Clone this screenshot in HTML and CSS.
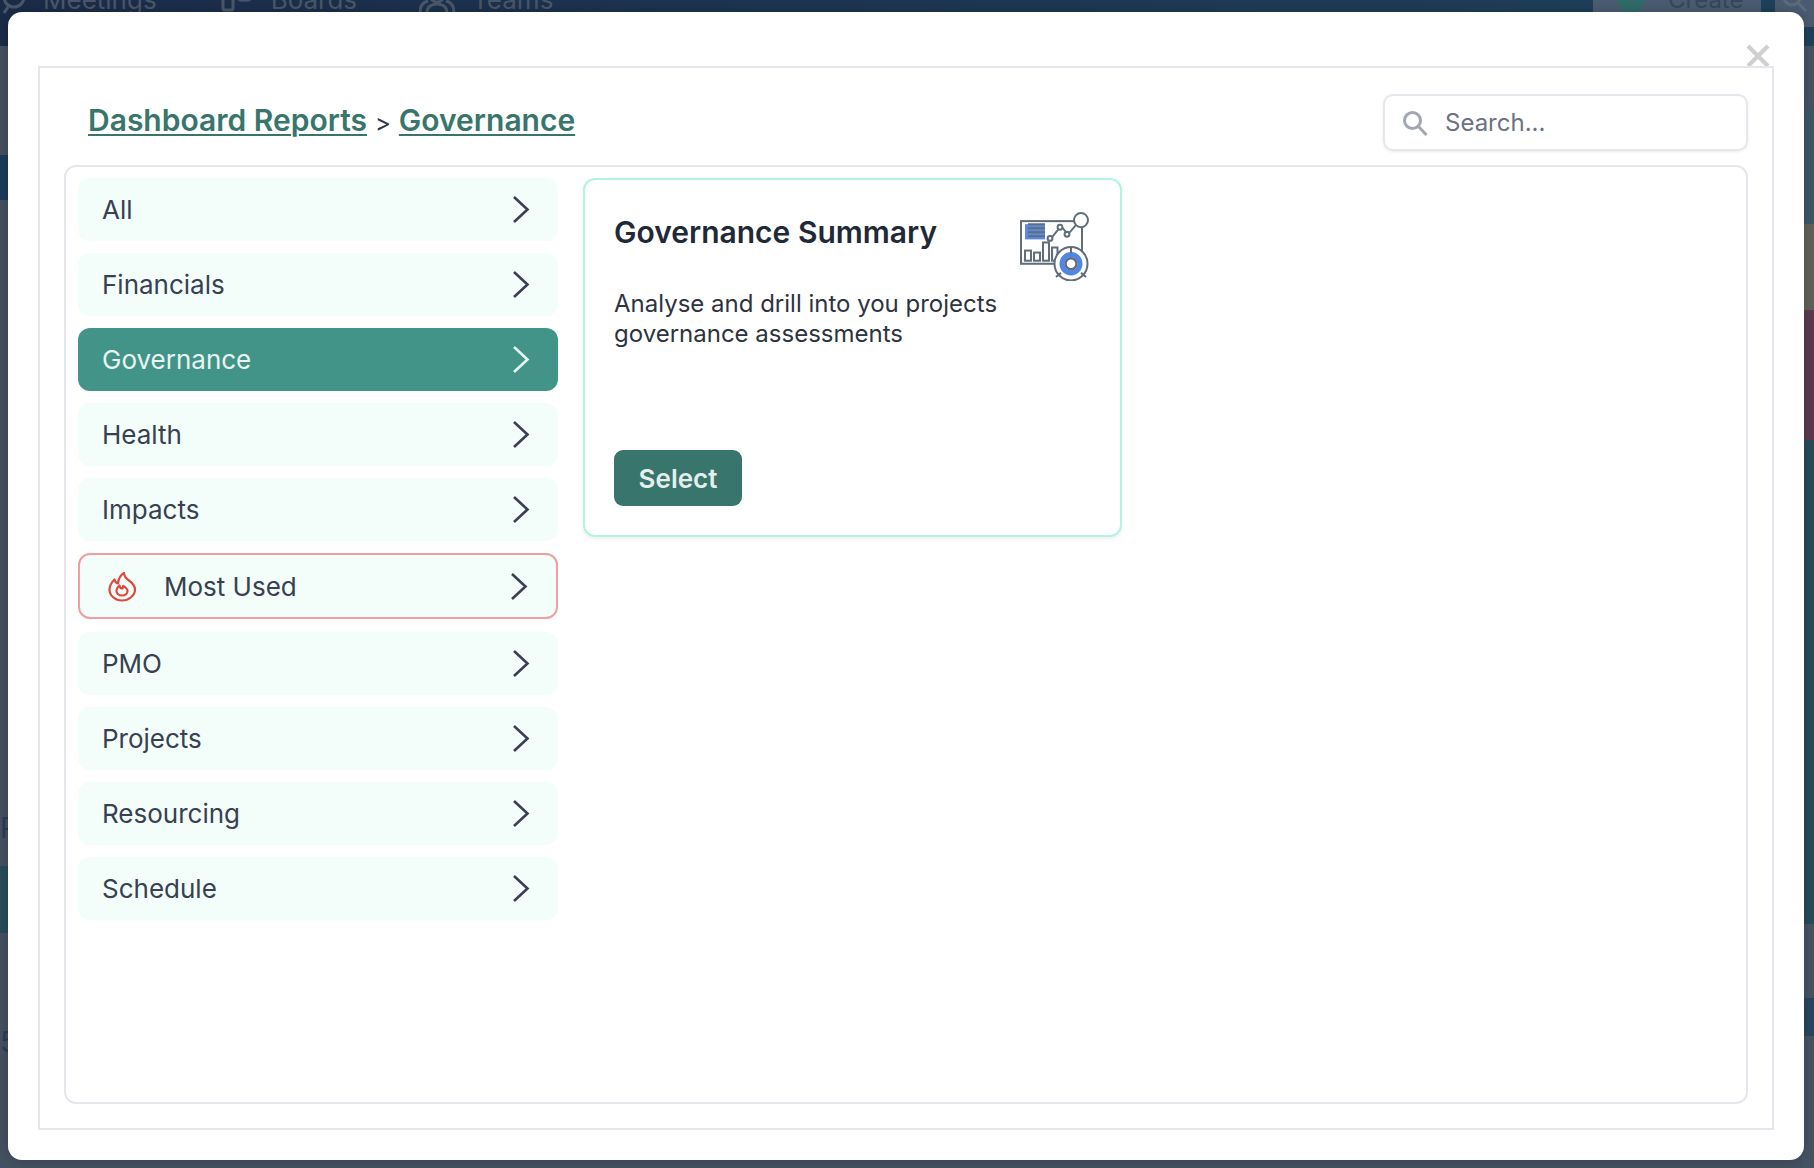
FILE: index.html
```html
<!DOCTYPE html>
<html lang="en">
<head>
<meta charset="utf-8">
<title>Dashboard Reports</title>
<link rel="stylesheet" href="styles.css">
</head>
<body>
<div class="page">
  <header class="nav">
    <div class="nav-item nav-meetings">
      <svg width="28" height="32" viewBox="0 0 28 32" fill="none" stroke="#4a5668" stroke-width="3"><circle cx="14" cy="14" r="10"/><path d="M0 10l5 4M28 8l-5 6M8 24l-4 6"/></svg>
      <span>Meetings</span>
    </div>
    <div class="nav-item nav-boards">
      <svg width="30" height="32" viewBox="0 0 30 32" fill="none" stroke="#4a5668" stroke-width="3"><rect x="2" y="0" width="10" height="27" rx="2"/><rect x="18" y="0" width="11" height="17" rx="2" fill="#4a5668"/></svg>
      <span>Boards</span>
    </div>
    <div class="nav-item nav-teams">
      <svg width="38" height="32" viewBox="0 0 38 32" fill="none" stroke="#4a5668" stroke-width="3"><circle cx="19" cy="12" r="7"/><path d="M2 30c0-7 3-11 8-12M36 30c0-7-3-11-8-12M9 30c0-6 4-9 10-9s10 3 10 9"/></svg>
      <span>Teams</span>
    </div>
    <div class="nav-create">
      <span class="create-dot"></span>
      <span>Create</span>
    </div>
    <div class="nav-search">
      <svg width="26" height="26" viewBox="0 0 26 26" fill="none" stroke="#5d6a7c" stroke-width="3"><circle cx="11" cy="11" r="8"/><path d="M17 17l8 8"/></svg>
    </div>
  </header>
  <div class="backdrop">
    <div class="strip-left">
      <div class="sl-gap-a"></div>
      <div class="sl-navy"></div>
      <div class="sl-gap-b"></div>
      <div class="sl-letter">P</div>
      <div class="sl-gap-c"></div>
      <div class="sl-teal"></div>
      <div class="sl-gap-d"></div>
      <div class="sl-letter">5</div>
    </div>
    <div class="strip-right"></div>
  </div>
</div>

<div class="modal">
  <button class="close" aria-label="Close">
    <svg width="24" height="24" viewBox="0 0 24 24" fill="none" stroke="#cfcfcf" stroke-width="4.2"><path d="M2 2l20 20M22 2L2 22"/></svg>
  </button>
  <div class="frame">
    <div class="head">
      <h1 class="crumbs"><a href="#">Dashboard Reports</a><span class="sep">&gt;</span><a href="#">Governance</a></h1>
      <div class="search">
        <svg width="26" height="26" viewBox="0 0 26 26" fill="none" stroke="#a3a7b0" stroke-width="3"><circle cx="10.5" cy="10.5" r="8"/><path d="M16.5 16.5l8 8.5"/></svg>
        <span>Search...</span>
      </div>
    </div>
    <div class="panel">
      <nav class="cats">
        <a class="cat" href="#"><span>All</span><svg class="chev" width="18" height="29" viewBox="0 0 18 29" fill="none" stroke="currentColor" stroke-width="2.6"><path d="M2 2l13.5 12.5L2 27"/></svg></a>
        <a class="cat" href="#"><span>Financials</span><svg class="chev" width="18" height="29" viewBox="0 0 18 29" fill="none" stroke="currentColor" stroke-width="2.6"><path d="M2 2l13.5 12.5L2 27"/></svg></a>
        <a class="cat active" href="#"><span>Governance</span><svg class="chev" width="18" height="29" viewBox="0 0 18 29" fill="none" stroke="currentColor" stroke-width="2.6"><path d="M2 2l13.5 12.5L2 27"/></svg></a>
        <a class="cat" href="#"><span>Health</span><svg class="chev" width="18" height="29" viewBox="0 0 18 29" fill="none" stroke="currentColor" stroke-width="2.6"><path d="M2 2l13.5 12.5L2 27"/></svg></a>
        <a class="cat" href="#"><span>Impacts</span><svg class="chev" width="18" height="29" viewBox="0 0 18 29" fill="none" stroke="currentColor" stroke-width="2.6"><path d="M2 2l13.5 12.5L2 27"/></svg></a>
        <a class="cat used" href="#">
          <svg class="flame" width="30" height="31" viewBox="0 0 30 31" fill="none" stroke="#e0483e" stroke-width="2.2" stroke-linejoin="round" stroke-linecap="round"><path d="M15 29.5C8 29.5 2.5 24.5 2.5 18.5C2.5 14 5 11 7.5 8.5C8 10.5 9 12 11 12.5C11.5 8 13.5 4 17 2C17 5.5 19 7.5 22.5 10C26 12.5 28 15 28 18.5C28 24.5 22 29.5 15 29.5Z"/><path d="M15 24.5C11.5 24.5 9.5 22 9.5 19.5C9.5 17.5 11 16 12.5 14.5C12.8 16.5 14 17.5 15.5 17.5C16 16.5 16.2 15.5 16.2 14.8C18.5 16.3 20.5 18 20.5 20C20.5 22.8 18 24.5 15 24.5Z"/></svg>
          <span>Most Used</span>
          <svg class="chev" width="18" height="29" viewBox="0 0 18 29" fill="none" stroke="currentColor" stroke-width="2.6"><path d="M2 2l13.5 12.5L2 27"/></svg>
        </a>
        <a class="cat" href="#"><span>PMO</span><svg class="chev" width="18" height="29" viewBox="0 0 18 29" fill="none" stroke="currentColor" stroke-width="2.6"><path d="M2 2l13.5 12.5L2 27"/></svg></a>
        <a class="cat" href="#"><span>Projects</span><svg class="chev" width="18" height="29" viewBox="0 0 18 29" fill="none" stroke="currentColor" stroke-width="2.6"><path d="M2 2l13.5 12.5L2 27"/></svg></a>
        <a class="cat" href="#"><span>Resourcing</span><svg class="chev" width="18" height="29" viewBox="0 0 18 29" fill="none" stroke="currentColor" stroke-width="2.6"><path d="M2 2l13.5 12.5L2 27"/></svg></a>
        <a class="cat" href="#"><span>Schedule</span><svg class="chev" width="18" height="29" viewBox="0 0 18 29" fill="none" stroke="currentColor" stroke-width="2.6"><path d="M2 2l13.5 12.5L2 27"/></svg></a>
      </nav>
      <article class="card">
        <div class="card-top">
          <h2>Governance Summary</h2>
          <svg class="card-icon" width="70" height="69" viewBox="0 0 70 68" preserveAspectRatio="none" fill="none" stroke="#616d7a" stroke-width="2">
            <rect x="1" y="9" width="61" height="42"/>
            <rect x="5" y="12" width="20" height="15" fill="#5b8be0" stroke="none"/>
            <path d="M8 12h17M8 16h17M8 20h17M8 24h17"/>
            <path d="M31 26l10-12 7 8 13-15" />
            <circle cx="30" cy="26" r="2.4" fill="#fff"/>
            <circle cx="40" cy="15" r="2.4" fill="#fff"/>
            <circle cx="47" cy="22" r="2.4" fill="#fff"/>
            <rect x="5" y="38" width="6" height="10"/>
            <rect x="14" y="40" width="6" height="8"/>
            <rect x="23" y="30" width="6" height="18"/>
            <rect x="32" y="35" width="5.5" height="13"/>
            <circle cx="61" cy="8" r="7" fill="#fff"/>
            <circle cx="51" cy="51" r="16.5" fill="#fff"/>
            <circle cx="51" cy="51" r="9" stroke="#4f86e8" stroke-width="5"/>
            <circle cx="51" cy="51" r="5.5" stroke-width="2.4"/>
            <path d="M51 34.5v6M41 60l-5 4M61 60l5 4"/>
          </svg>
        </div>
        <p>Analyse and drill into you projects governance assessments</p>
        <button class="select">Select</button>
      </article>
    </div>
  </div>
</div>
</body>
</html>
```

FILE: styles.css
```css
* { box-sizing: border-box; }
html, body { margin: 0; padding: 0; height: 100%; overflow: hidden; }
body { font-family: "Inter", "Liberation Sans", sans-serif; background: #43505f; color: #374151; }

.page { margin-top: -48px; height: 1216px; display: flex; flex-direction: column; }

.nav {
  flex: none; height: 94px; display: flex; align-items: center; gap: 65px;
  background: linear-gradient(90deg, #1a2b48, #1f4059);
  color: #4a5668; font-size: 26px;
}
.nav-item { display: flex; align-items: center; }
.nav-meetings { gap: 15px; }
.nav-boards { gap: 20px; margin-left: -1px; }
.nav-teams { gap: 16px; margin-left: -4px; }
.nav-create {
  margin-left: auto; width: 168px; height: 56px; padding-left: 24px; gap: 23px;
  display: flex; align-items: center; background: #4a5a70; color: #36455a; font-size: 24px;
}
.create-dot { width: 28px; height: 28px; border-radius: 50%; background: #2f6a68; }
.nav-search {
  width: 39px; height: 56px; margin-left: -51px; background: #4a5a70;
  display: flex; align-items: center; padding-left: 6px;
}

.backdrop { flex: 1; display: flex; justify-content: space-between; }
.strip-left { width: 8px; overflow: hidden; display: flex; flex-direction: column; }
.sl-gap-a { height: 109px; }
.sl-navy { height: 45px; background: #1c3a58; }
.sl-gap-b { height: 611px; }
.sl-letter { height: 34px; font-size: 28px; line-height: 34px; color: #2c3a55; }
.sl-gap-c { height: 21px; }
.sl-teal { height: 67px; background: #274a58; }
.sl-gap-d { height: 92px; }
.strip-right {
  width: 12px;
  background: linear-gradient(180deg,
    #445262 0, #445262 64px,
    #3b5663 64px, #3b5663 178px,
    #5f5f58 178px, #5f5f58 264px,
    #5a3a4e 264px, #5a3a4e 394px,
    #264a58 394px, #264a58 878px,
    #445262 878px, #445262 952px,
    #27455c 952px, #27455c 990px,
    #445262 990px);
}

.modal {
  position: absolute; left: 8px; top: 12px; width: 1796px; height: 1148px;
  padding: 54px 30px 30px 30px; background: #fff; border-radius: 14px;
  box-shadow: 0 0 10px rgba(0, 0, 0, .18);
}
.close {
  position: absolute; right: 34px; top: 32px; padding: 0; border: 0; background: none;
  display: block; line-height: 0;
}
.frame {
  position: relative; height: 100%; border: 2px solid #e6e6ec; background: #fff;
  padding: 26px 24px 24px; display: flex; flex-direction: column; gap: 14px;
}
.head { flex: none; height: 57px; display: flex; align-items: center; justify-content: space-between; padding-left: 24px; }
.crumbs { margin: -6px 0 0; font-size: 30px; font-weight: 600; color: #2d3748; display: flex; align-items: baseline; gap: 8px; }
.crumbs a { color: #38756c; text-decoration: underline; text-decoration-thickness: 2px; text-underline-offset: 3px; }
.sep { font-size: 24px; font-weight: 400; }
.search {
  width: 365px; height: 57px; border: 2px solid #e6e6ec; border-radius: 10px;
  display: flex; align-items: center; gap: 17px; padding-left: 17px;
  font-size: 24px; color: #6b7280; box-shadow: 0 1px 3px rgba(0, 0, 0, .08);
}

.panel {
  flex: 1; min-height: 0; border: 2px solid #e6e6ec; border-radius: 12px;
  padding: 11px 12px; display: flex; align-items: flex-start; gap: 25px;
}
.cats { width: 480px; flex: none; display: flex; flex-direction: column; gap: 12px; }
.cat {
  height: 63px; display: flex; align-items: center; justify-content: space-between;
  padding: 0 28px 0 24px; border-radius: 12px; background: #f3fdfa;
  color: #374151; font-size: 26px; text-decoration: none;
}
.cat.active { background: #439488; color: #e8f4f2; }
.cat.used {
  height: 66px; margin-bottom: 1px; border: 2px solid #ef9f9f;
  justify-content: flex-start; padding: 0 28px 0 27px;
}
.flame { flex: none; margin-right: 27px; }
.cat.used .chev { margin-left: auto; }

.card {
  width: 539px; flex: none; height: 359px; border: 2px solid #b2f3e3; border-radius: 12px;
  padding: 29px; background: #fff; box-shadow: 0 2px 4px rgba(0, 0, 0, .07);
  display: flex; flex-direction: column;
}
.card-top { display: flex; justify-content: space-between; align-items: flex-start; height: 72px; }
.card h2 { margin: 3px 0 0; font-size: 30px; line-height: 40px; font-weight: 600; color: #1f2937; }
.card-icon { margin: 3px 1px 0 0; }
.card p { margin: 8px 0 0; font-size: 24px; line-height: 30px; color: #2d3340; }
.select {
  margin-top: auto; width: 128px; height: 56px; border: 0; border-radius: 9px;
  background: #38756c; color: #e4efed; font: 600 26px "Inter", sans-serif;
}
```
